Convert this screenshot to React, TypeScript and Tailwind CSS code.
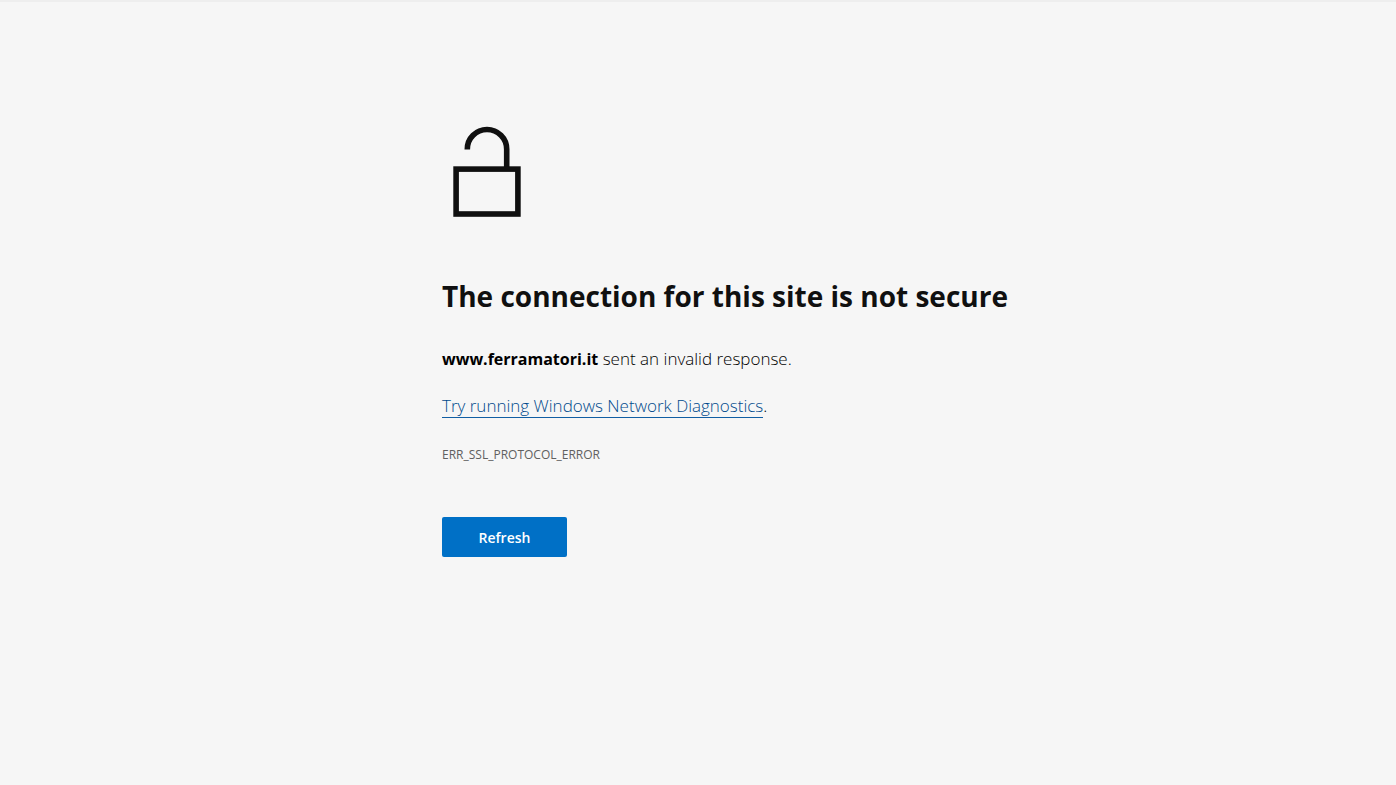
function UnlockedIcon() {
  return (
    <svg className="block h-24 w-24" viewBox="0 0 96 96" fill="none" stroke="#101010" strokeWidth="5.6" aria-hidden="true">
      <path d="M25.3 27.6 V27.2 A19.7 19.7 0 0 1 64.7 27.2 V46" />
      <rect x="14.1" y="47.1" width="61.8" height="44.9" />
    </svg>
  );
}

export default function App() {
  return (
    <div className="min-h-screen border-t-2 border-[#eeeeee] bg-[#f6f6f6] font-['Open_Sans','Noto_Sans',sans-serif] text-[#101010]">
      <main className="mx-auto max-w-lg pt-[120px]">
        <UnlockedIcon />
        <h1 className="mt-[58px] text-[28px] leading-10 font-bold whitespace-nowrap">
          The connection for this site is not secure
        </h1>
        <p className="mt-[29px] text-[17px] leading-7 font-light text-black">
          <strong className="text-base font-bold">www.ferramatori.it</strong> sent an invalid response.
        </p>
        <p className="mt-[19px] text-[17px] leading-7 font-light text-black">
          <a href="#diagnostics" className="border-b border-[#115ea3] text-[#004a8c]">
            Try running Windows Network Diagnostics
          </a>
          .
        </p>
        <p className="mt-[25px] text-xs leading-5 text-[#606060]">ERR_SSL_PROTOCOL_ERROR</p>
        <button type="button" className="mt-[52px] h-10 w-[125px] rounded-xs bg-[#0070c6] pt-0.5 text-sm font-semibold text-white">
          Refresh
        </button>
      </main>
    </div>
  );
}
